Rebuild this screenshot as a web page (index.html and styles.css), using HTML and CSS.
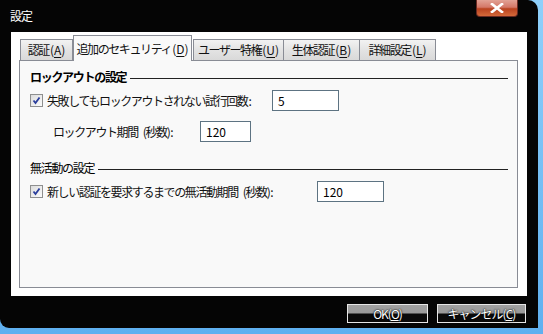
FILE: index.html
```html
<!DOCTYPE html>
<html lang="ja">
<head>
    <meta charset="UTF-8">
    <title>設定</title>
    <link rel="stylesheet" href="styles.css">
</head>
<body>
    <div class="window">
        <div class="title-bar">
            <span class="title">設定</span>
            <button class="close-btn">
                <svg width="14" height="10" viewBox="0 0 14 10"><path d="M2 1 L12 9 M12 1 L2 9" stroke="#fff" stroke-width="2.6" stroke-linecap="square"/></svg>
            </button>
        </div>

        <div class="client">
            <div class="tabs">
                <div class="tab t1">認証<span class="key">(<u>A</u>)</span></div>
                <div class="tab t2 active">追加のセキュリティ<span class="key">(<u>D</u>)</span></div>
                <div class="tab t3">ユーザー特権<span class="key">(<u>U</u>)</span></div>
                <div class="tab t4">生体認証<span class="key">(<u>B</u>)</span></div>
                <div class="tab t5">詳細設定<span class="key">(<u>L</u>)</span></div>
            </div>

            <div class="panel">
                <div class="group-title bold"><span>ロックアウトの設定</span><div class="rule"></div></div>
                <div class="row row-first">
                    <span class="check">
                        <svg width="11" height="11" viewBox="0 0 11 11"><path d="M2.5 5.5 L4.5 8 L8.5 2.5" fill="none" stroke="#2a3e9c" stroke-width="1.8"/></svg>
                    </span>
                    <label class="label-wide">失敗してもロックアウトされない試行回数<span class="key">:</span></label>
                    <div class="field w66">5</div>
                </div>
                <div class="row row-sub">
                    <label class="label-sub">ロックアウト期間<span class="gap"></span>(秒数)<span class="key">:</span></label>
                    <div class="field w50">120</div>
                </div>

                <div class="group-title group-second"><span>無活動の設定</span><div class="rule"></div></div>
                <div class="row row-first">
                    <span class="check">
                        <svg width="11" height="11" viewBox="0 0 11 11"><path d="M2.5 5.5 L4.5 8 L8.5 2.5" fill="none" stroke="#2a3e9c" stroke-width="1.8"/></svg>
                    </span>
                    <label class="label-long">新しい認証を要求するまでの無活動期間<span class="gap"></span>(秒数)<span class="key">:</span></label>
                    <div class="field w66">120</div>
                </div>
            </div>
        </div>

        <div class="buttons">
            <button class="btn btn-ok">OK(<u>O</u>)</button>
            <button class="btn btn-cancel">キャンセル(<u>C</u>)</button>
        </div>
    </div>
</body>
</html>
```

FILE: styles.css
```css
* {
    margin: 0;
    padding: 0;
    box-sizing: border-box;
    font-family: "Noto Sans CJK JP", "Noto Sans", sans-serif;
}
body {
    width: 543px;
    height: 334px;
    background: linear-gradient(#8fd0fb, #5fb0f0);
    overflow: hidden;
}
.window {
    width: 538px;
    height: 328px;
    background-color: #050505;
    border-top-right-radius: 10px;
    border-bottom-left-radius: 9px;
    display: flex;
    flex-direction: column;
}
.title-bar {
    height: 32px;
    display: flex;
    align-items: flex-start;
    justify-content: space-between;
    padding-left: 10px;
    padding-right: 20px;
}
.title {
    color: #fff;
    font-size: 12px;
    line-height: 12px;
    margin-top: 10px;
    letter-spacing: -1px;
}
.close-btn {
    width: 42px;
    height: 17px;
    border: 1px solid #6b2a22;
    border-top: none;
    border-radius: 0 0 4px 4px;
    background: linear-gradient(#e2a295 0%, #d47868 45%, #b9421f 55%, #d46a3a 100%);
    display: flex;
    align-items: center;
    justify-content: center;
}
.client {
    margin-left: 11px;
    width: 516px;
    height: 264px;
    background-color: #fff;
    padding: 3px 9px 8px 8px;
    display: flex;
    flex-direction: column;
}
.tabs {
    display: flex;
    align-items: flex-end;
    height: 25px;
    padding-left: 1px;
    position: relative;
    z-index: 1;
}
.tab {
    height: 21px;
    border: 1px solid #898c95;
    border-bottom: none;
    background: linear-gradient(#f2f2f2, #e3e3e3 50%, #d9d9d9);
    font-size: 12px;
    letter-spacing: -1.4px;
    white-space: nowrap;
    color: #111;
    line-height: 20px;
    text-align: center;
    margin-right: -1px;
}
.key {
    letter-spacing: 0;
    padding-left: 1px;
}
.tab u {
    text-decoration-thickness: 1px;
    text-underline-offset: 2px;
}
.t1 { width: 53px; }
.t2 { width: 119px; }
.t3 { width: 91px; }
.t4 { width: 77px; }
.t5 { width: 77px; }
.tab.active {
    height: 26px;
    margin-bottom: -1px;
    background: #f9f9f9;
    line-height: 26px;
    margin-left: 1px;
    margin-right: 1px;
}
.panel {
    flex: 1;
    border: 1px solid #898c95;
    background-color: #f9f9f9;
    padding: 7px 9px 0 10px;
}
.group-title {
    display: flex;
    align-items: center;
    font-size: 12px;
    letter-spacing: -1.3px;
    white-space: nowrap;
    color: #000;
    height: 16px;
}
.group-title.bold {
    font-weight: bold;
}
.group-title span {
    padding-right: 4px;
    flex-shrink: 0;
}
.rule {
    flex: 1;
    height: 1px;
    background-color: #222;
    margin-top: 5px;
}
.group-second {
    margin-top: 17px;
}
.row {
    display: flex;
    align-items: center;
    font-size: 12px;
    letter-spacing: -1.4px;
    white-space: nowrap;
    color: #111;
}
.gap {
    display: inline-block;
    width: 5px;
}
.row-first {
    margin-top: 5px;
    height: 22px;
}
.row-sub {
    margin-top: 10px;
    height: 21px;
    padding-left: 23px;
}
.check {
    width: 13px;
    height: 13px;
    border: 1px solid #8e8f8f;
    background: linear-gradient(135deg, #dcdcdc, #fbfbfb);
    display: flex;
    align-items: center;
    justify-content: center;
    margin-right: 4px;
    flex-shrink: 0;
}
.label-wide {
    width: 225px;
    flex-shrink: 0;
}
.label-sub {
    width: 147px;
    flex-shrink: 0;
}
.label-long {
    width: 270px;
    flex-shrink: 0;
}
.field {
    height: 21px;
    border: 1px solid #5d7382;
    background-color: #fff;
    font-size: 12px;
    letter-spacing: 0;
    line-height: 19px;
    padding-left: 5px;
    color: #000;
}
.w66 { width: 67px; }
.w50 { width: 51px; }
.buttons {
    display: flex;
    justify-content: flex-end;
    gap: 9px;
    padding-top: 8px;
    padding-right: 12px;
}
.btn {
    height: 19px;
    border: 1px solid #e6e6e6;
    background: linear-gradient(#a0a0a0 0%, #9a9a9a 48%, #0a0a0a 52%, #0a0a0a 100%);
    color: #fff;
    font-size: 12px;
    letter-spacing: -1px;
    white-space: nowrap;
    line-height: 16px;
    text-shadow: 0 0 2px #000, 0 0 1px #000;
}
.btn-ok { width: 81px; }
.btn-cancel { width: 89px; }
```
